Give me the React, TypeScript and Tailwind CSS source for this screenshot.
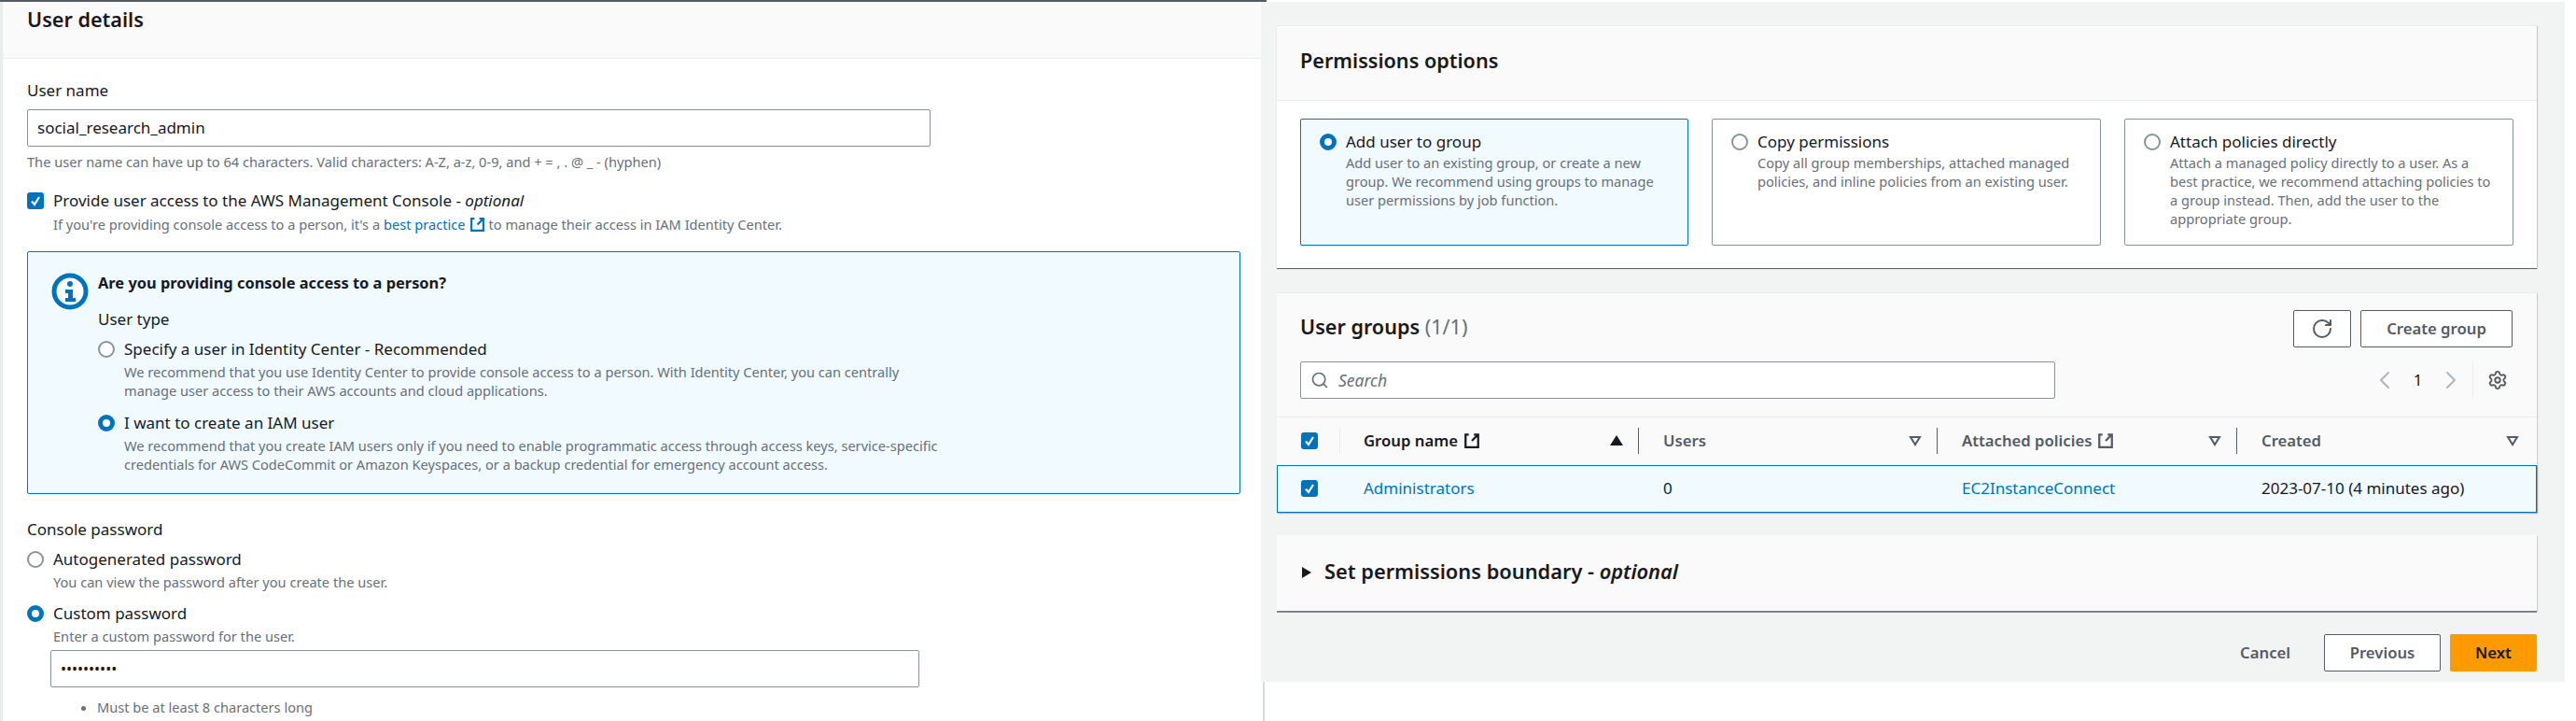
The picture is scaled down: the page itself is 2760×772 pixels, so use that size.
import React from "react";
import { ChevronLeft, ChevronRight, RotateCw, Search, Settings } from "lucide-react";

const ExternalIcon = ({ className = "" }: { className?: string }) => (
  <svg viewBox="0 0 16 16" fill="none" stroke="currentColor" strokeWidth="2" className={className}>
    <path d="M10 2H14V14H2V2H5M14 2L8 8" />
  </svg>
);

const Radio = ({ checked = false }: { checked?: boolean }) =>
  checked ? (
    <span className="block w-[18px] h-[18px] rounded-full border-[5px] border-[#0073bb] bg-white shrink-0" />
  ) : (
    <span className="block w-[18px] h-[18px] rounded-full border-2 border-[#879596] bg-white shrink-0" />
  );

const Check = () => (
  <span className="w-[18px] h-[18px] rounded-[3px] bg-[#0073bb] flex items-center justify-center shrink-0">
    <svg viewBox="0 0 14 14" fill="none" stroke="white" strokeWidth="2.2" className="w-[14px] h-[14px]">
      <path d="M3 7.5L6 11L11 3" />
    </svg>
  </span>
);

const SortDown = () => (
  <svg viewBox="0 0 14 12" fill="none" stroke="#545b64" strokeWidth="2" className="w-[14px] h-[12px] shrink-0">
    <path d="M2 2H12L7 10Z" />
  </svg>
);

const RadioRow = ({ checked, label, children }: { checked?: boolean; label: string; children?: React.ReactNode }) => (
  <div className="flex gap-[10px]">
    <div className="pt-[3px]">
      <Radio checked={checked} />
    </div>
    <div>
      <div className="text-[17px] leading-[24px] text-[#16191f]">{label}</div>
      <div className="text-[14.6px] leading-[20px] text-[#687078] mt-[2px]">{children}</div>
    </div>
  </div>
);

const OptionCard = ({ checked, label, text }: { checked?: boolean; label: string; text: string[] }) => (
  <div
    className={
      checked
        ? "w-[416px] h-[136px] rounded-[2px] border border-[#0073bb] bg-[#f1faff] flex gap-[10px] pt-[12px] pl-[20px]"
        : "w-[417px] h-[136px] rounded-[2px] border border-[#879596] bg-white flex gap-[10px] pt-[12px] pl-[20px]"
    }
  >
    <div className="pt-[3px]">
      <Radio checked={checked} />
    </div>
    <div>
      <div className="text-[17px] leading-[24px] text-[#16191f]">{label}</div>
      <div className="text-[14.6px] leading-[20px] text-[#687078]">
        {text.map((line) => (
          <div key={line}>{line}</div>
        ))}
      </div>
    </div>
  </div>
);

const App = () => {
  return (
    <div className="w-[2760px] h-[772px] bg-white flex overflow-hidden font-['Noto_Sans',sans-serif]">
      {/* left screenshot */}
      <div className="w-[1351px] h-full border-l-[3px] border-[#eaeded] relative">
        <div className="absolute -left-[3px] top-0 w-[1357px] h-[2px] bg-[#545b64]" />
        <div className="h-[63px] bg-[#fafafa] border-b border-[#eaeded] pl-[26px] pt-[8px]">
          <h2 className="text-[21.6px] leading-[26px] font-semibold text-[#16191f]">User details</h2>
        </div>
        <div className="pl-[26px] pr-[22px] pt-[22px]">
          <div className="text-[17px] leading-[24px] text-[#16191f]">User name</div>
          <div className="w-[968px] h-[40px] mt-[8px] border border-[#879596] rounded-[2px] flex items-center pl-[10px] text-[17px] text-[#16191f]">
            social_research_admin
          </div>
          <div className="text-[14.6px] leading-[20px] text-[#687078] mt-[6px]">
            The user name can have up to 64 characters. Valid characters: A-Z, a-z, 0-9, and + = , . @ _ - (hyphen)
          </div>
          <div className="flex gap-[10px] mt-[20px]">
            <div className="pt-[3px]">
              <Check />
            </div>
            <div>
              <div className="text-[17px] leading-[24px] text-[#16191f]">
                Provide user access to the AWS Management Console - <i>optional</i>
              </div>
              <div className="text-[14.6px] leading-[20px] text-[#687078] mt-[3px] flex items-center gap-[4px]">
                If you're providing console access to a person, it's a <span className="text-[#0073bb]">best practice</span>
                <ExternalIcon className="w-[17px] h-[17px] text-[#0073bb]" /> to manage their access in IAM Identity Center.
              </div>
            </div>
          </div>
          <div className="w-[1300px] h-[260px] mt-[19px] border border-[#0073bb] bg-[#f1faff] rounded-[2px] flex pl-[25px] pt-[22px] gap-[10px]">
            <svg viewBox="0 0 40 40" className="w-[40px] h-[40px] shrink-0">
              <circle cx="20" cy="20" r="17" fill="white" stroke="#0073bb" strokeWidth="5" />
              <circle cx="20" cy="12" r="3" fill="#0073bb" />
              <path d="M15 18H23V27H26V31H15V27H18V22H15Z" fill="#0073bb" />
            </svg>
            <div>
              <div className="text-[16.4px] leading-[22px] font-bold text-[#16191f]">Are you providing console access to a person?</div>
              <div className="text-[17px] leading-[24px] text-[#16191f] mt-[16px]">User type</div>
              <div className="flex flex-col gap-[13px] mt-[8px]">
                <RadioRow label="Specify a user in Identity Center - Recommended">
                  We recommend that you use Identity Center to provide console access to a person. With Identity Center, you can centrally
                  <br />
                  manage user access to their AWS accounts and cloud applications.
                </RadioRow>
                <RadioRow checked label="I want to create an IAM user">
                  We recommend that you create IAM users only if you need to enable programmatic access through access keys, service-specific
                  <br />
                  credentials for AWS CodeCommit or Amazon Keyspaces, or a backup credential for emergency account access.
                </RadioRow>
              </div>
            </div>
          </div>
          <div className="text-[17px] leading-[24px] text-[#16191f] mt-[26px]">Console password</div>
          <div className="flex flex-col gap-[12px] mt-[8px]">
            <RadioRow label="Autogenerated password">You can view the password after you create the user.</RadioRow>
            <RadioRow checked label="Custom password">Enter a custom password for the user.</RadioRow>
          </div>
          <div className="w-[931px] h-[40px] ml-[25px] mt-[5px] border border-[#879596] rounded-[2px] flex items-center pl-[10px] text-[16px] text-[#16191f]">
            ••••••••••
          </div>
          <ul className="list-disc pl-[75px] mt-[11px] text-[14.6px] leading-[20px] text-[#687078]">
            <li>Must be at least 8 characters long</li>
          </ul>
        </div>
      </div>

      {/* right screenshot */}
      <div className="h-full flex flex-col">
        <div className="w-[1397px] h-[728px] mt-[2px] bg-[#f2f3f3] pl-[17px] pt-[25px]">
          <div className="w-[1350px] h-[260px] bg-white shadow-[0_1px_1px_0_#00000030,1px_1px_1px_0_#00000026,0_1px_0_0_#879596] border-t border-[#eaeded]">
            <div className="h-[80px] bg-[#fafafa] border-b border-[#eaeded] pl-[25px] pb-[5px] flex items-center">
              <h2 className="text-[21.6px] font-semibold text-[#16191f]">Permissions options</h2>
            </div>
            <div className="flex gap-[25px] pl-[25px] pt-[19px]">
              <OptionCard
                checked
                label="Add user to group"
                text={["Add user to an existing group, or create a new", "group. We recommend using groups to manage", "user permissions by job function."]}
              />
              <OptionCard
                label="Copy permissions"
                text={["Copy all group memberships, attached managed", "policies, and inline policies from an existing user."]}
              />
              <OptionCard
                label="Attach policies directly"
                text={[
                  "Attach a managed policy directly to a user. As a",
                  "best practice, we recommend attaching policies to",
                  "a group instead. Then, add the user to the",
                  "appropriate group.",
                ]}
              />
            </div>
          </div>

          <div className="w-[1350px] h-[235px] mt-[26px] bg-[#fafafa] shadow-[1px_1px_1px_0_#00000026] border-t border-[#eaeded]">
            <div className="h-[133px] pl-[25px] pr-[26px] border-b border-[#eaeded]">
              <div className="flex items-center justify-between pt-[18px]">
                <h2 className="text-[21.6px] leading-[36px] pb-[4px] font-semibold text-[#16191f]">
                  User groups <span className="font-normal text-[#687078]">(1/1)</span>
                </h2>
                <div className="flex gap-[10px]">
                  <div className="w-[62px] h-[40px] border border-[#545b64] rounded-[2px] bg-white flex items-center justify-center text-[#545b64]">
                    <RotateCw size={24} />
                  </div>
                  <div className="w-[163px] h-[40px] border border-[#545b64] rounded-[2px] bg-white flex items-center justify-center text-[16.7px] font-semibold text-[#545b64]">
                    Create group
                  </div>
                </div>
              </div>
              <div className="flex items-center justify-between mt-[15px]">
                <div className="w-[809px] h-[40px] border border-[#879596] rounded-[2px] bg-white flex items-center pl-[10px] gap-[10px]">
                  <Search size={20} className="text-[#687078]" />
                  <span className="text-[17.5px] italic text-[#687078]">Search</span>
                </div>
                <div className="flex items-center h-[40px] text-[#aab7b8] mr-[5px]">
                  <ChevronLeft size={32} strokeWidth={1.5} className="-mx-[3px]" />
                  <span className="text-[17px] text-[#16191f] w-[45px] text-center">1</span>
                  <ChevronRight size={32} strokeWidth={1.5} className="-mx-[3px]" />
                  <div className="h-[40px] border-l border-[#eaeded] ml-[10px] pl-[15px] flex items-center text-[#545b64]">
                    <Settings size={22} />
                  </div>
                </div>
              </div>
            </div>
            <div className="h-[51px] pb-[2px] flex items-center text-[16.7px] font-semibold">
              <div className="w-[68px] h-full flex items-center pl-[26px] relative">
                <Check />
                <span className="absolute right-0 top-[11px] h-[28px] border-l border-[#eaeded]" />
              </div>
              <div className="w-[320px] h-full flex items-center pl-[25px] pr-[17px] text-[#16191f] relative">
                Group name <ExternalIcon className="w-[18px] h-[18px] ml-[6px]" />
                <span className="ml-auto w-0 h-0 border-x-[7px] border-x-transparent border-b-[11px] border-b-[#16191f]" />
                <span className="absolute right-0 top-[11px] h-[28px] border-l border-[#545b64]" />
              </div>
              <div className="w-[320px] h-full flex items-center pl-[26px] pr-[17px] text-[#545b64] relative">
                Users
                <span className="ml-auto">
                  <SortDown />
                </span>
                <span className="absolute right-0 top-[11px] h-[28px] border-l border-[#545b64]" />
              </div>
              <div className="w-[321px] h-full flex items-center pl-[26px] pr-[17px] text-[#545b64] relative">
                Attached policies <ExternalIcon className="w-[18px] h-[18px] ml-[6px]" />
                <span className="ml-auto">
                  <SortDown />
                </span>
                <span className="absolute right-0 top-[11px] h-[28px] border-l border-[#545b64]" />
              </div>
              <div className="flex-1 h-full flex items-center pl-[26px] pr-[19px] text-[#545b64]">
                Created
                <span className="ml-auto">
                  <SortDown />
                </span>
              </div>
            </div>
            <div className="h-[51px] pb-[2px] flex items-center text-[17px] bg-[#f1faff] border border-[#0073bb] shadow-[1px_1px_1px_0_#00000040]">
              <div className="w-[67px] flex items-center pl-[25px]">
                <Check />
              </div>
              <div className="w-[320px] pl-[25px] text-[#0073bb]">Administrators</div>
              <div className="w-[320px] pl-[26px] text-[#16191f]">0</div>
              <div className="w-[321px] pl-[26px] text-[#0073bb]">EC2InstanceConnect</div>
              <div className="flex-1 pl-[26px] text-[#16191f]">2023-07-10 (4 minutes ago)</div>
            </div>
          </div>

          <div className="w-[1350px] h-[81px] mt-[25px] pb-[2px] bg-[#fafafa] shadow-[1px_1px_1px_0_#00000026,0_2px_0_0_#879596] flex items-center pl-[27px] gap-[14px]">
            <span className="w-0 h-0 border-y-[6px] border-y-transparent border-l-[10px] border-l-[#16191f]" />
            <span className="text-[21.8px] font-semibold text-[#16191f]">
              Set permissions boundary - <i>optional</i>
            </span>
          </div>

          <div className="w-[1350px] flex justify-end items-center mt-[25px] text-[16.7px] font-semibold">
            <span className="text-[#545b64] mr-[36px]">Cancel</span>
            <div className="w-[125px] h-[40px] border border-[#545b64] rounded-[2px] bg-white text-[#545b64] flex items-center justify-center">Previous</div>
            <div className="w-[93px] h-[40px] ml-[10px] rounded-[2px] bg-[#ff9900] text-[#16191f] flex items-center justify-center">Next</div>
          </div>
        </div>
        <div className="flex-1 ml-[2px] w-[4px] border-l-[2px] border-[#d5dbdb]" />
      </div>
    </div>
  );
};

export default App;
